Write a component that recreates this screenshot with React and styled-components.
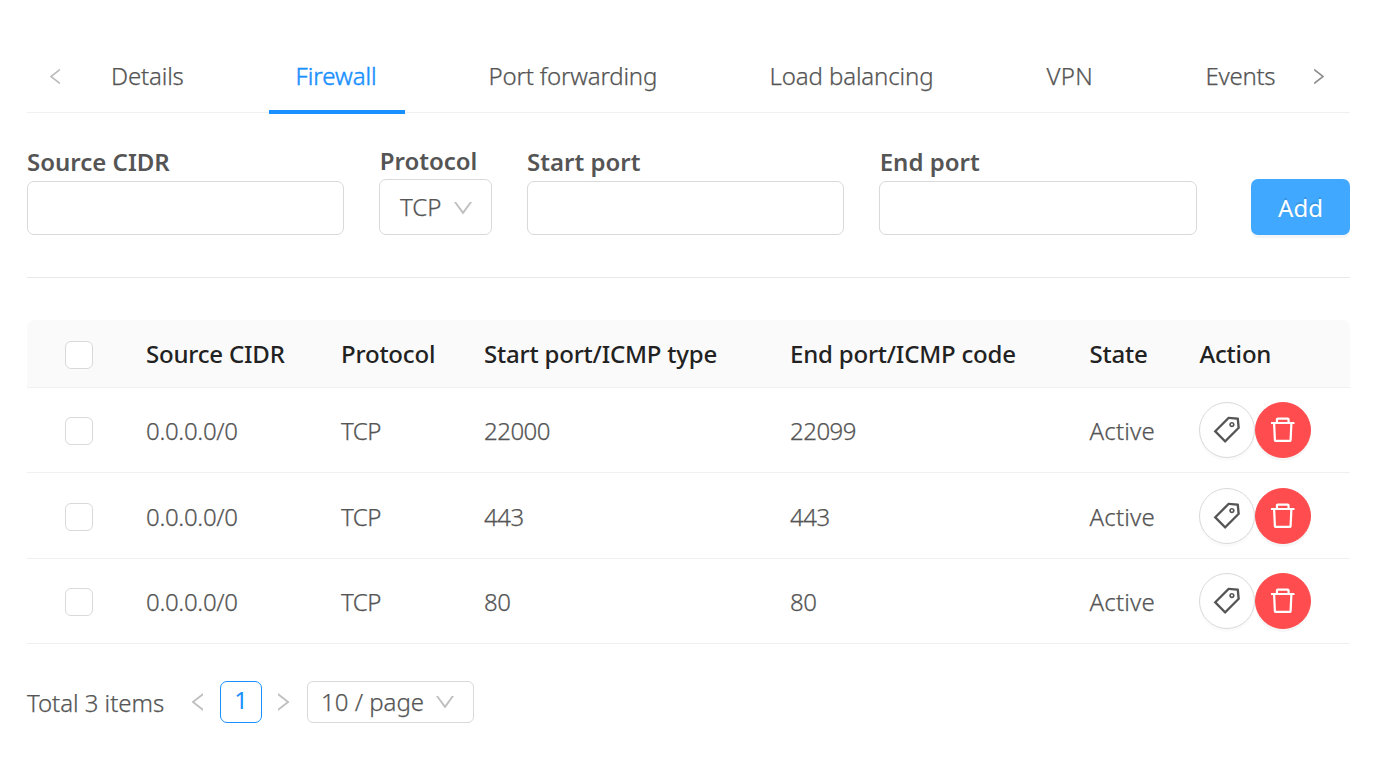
import React from 'react';
import styled, { createGlobalStyle, css } from 'styled-components';
import {
  AiOutlineLeft,
  AiOutlineRight,
  AiOutlineDown,
  AiOutlineTag,
  AiOutlineDelete,
} from 'react-icons/ai';

const Global = createGlobalStyle`
  *, *::before, *::after { box-sizing: border-box; }
  body {
    margin: 0;
    background: #fff;
    color: #555;
    font: 300 24px/38px "Noto Sans", "Open Sans", sans-serif;
    -webkit-text-stroke: 0.25px currentColor;
  }
  button, input { font: inherit; color: inherit; margin: 0; outline: none; }
  svg { display: block; flex: none; }
`;

const Page = styled.main`
  width: 1380px;
  height: 757px;
  padding: 39px 30px 0 27px;
  overflow: hidden;
`;

const TabBar = styled.nav`
  display: flex;
  height: 74px;
  border-bottom: 1px solid #f0f0f0;
`;

const NavArrow = styled.button`
  display: flex;
  align-items: center;
  justify-content: center;
  flex: none;
  width: ${(p) => p.$width}px;
  height: 74px;
  padding: 0;
  border: 0;
  background: none;
  color: ${(p) => (p.$disabled ? '#bbb' : '#8c8c8c')};
`;

const TabList = styled.div`
  display: flex;
  flex: 1;
  gap: 56px;
  height: 75px;
  min-width: 0;
`;

const Tab = styled.div`
  flex: none;
  width: ${(p) => p.$width}px;
  height: 75px;
  padding: 18px 0 0 28px;
  white-space: nowrap;
  letter-spacing: ${(p) => p.$spacing || 0}px;
  ${(p) =>
    p.$active &&
    css`
      padding-left: 27px;
      color: #1890ff;
      border-bottom: 4px solid #1890ff;
      -webkit-text-stroke-width: 0.5px;
    `}
`;

const RuleForm = styled.form`
  display: flex;
  align-items: flex-end;
  height: 165px;
  padding-bottom: 42px;
  border-bottom: 1px solid #e8e8e8;
`;

const Field = styled.label`
  display: flex;
  flex-direction: column;
  flex: none;
  width: ${(p) => p.$width}px;
  margin-right: ${(p) => p.$after}px;
`;

const FieldLabel = styled.span`
  height: ${(p) => p.$height || 38}px;
  padding-left: ${(p) => p.$indent || 0}px;
  white-space: nowrap;
  font-weight: 600;
  -webkit-text-stroke-width: 0;
`;

const TextInput = styled.input`
  width: 100%;
  height: 54px;
  padding: 0 19px;
  border: 1px solid #d9d9d9;
  border-radius: 7px;
  background: #fff;
`;

const Select = styled.div`
  display: flex;
  align-items: center;
  justify-content: space-between;
  width: ${(p) => p.$width}px;
  height: ${(p) => p.$height}px;
  padding: ${(p) => p.$padding};
  border: 1px solid #d9d9d9;
  border-radius: ${(p) => p.$radius}px;
  white-space: nowrap;

  svg {
    margin-top: ${(p) => p.$iconTop || 0}px;
    color: #bfbfbf;
  }
`;

const AddButton = styled.button`
  width: 99px;
  height: 56px;
  padding: 2px 0 0;
  border: 0;
  border-radius: 7px;
  background: #40a9ff;
  box-shadow: 0 3px 0 rgba(0, 0, 0, 0.04);
  color: #fff;
  font-weight: 400;
  text-shadow: 0 -2px 0 rgba(0, 0, 0, 0.12);
  -webkit-text-stroke-width: 0;
`;

const Table = styled.div`
  margin-top: 42px;
`;

const Row = styled.div`
  display: grid;
  grid-template-columns: 119px 195px 143px 306px 299.5px 110px 1fr;
  align-items: center;
  height: ${(p) => p.$height}px;
  border-bottom: 1px solid #f0f0f0;
`;

const HeadRow = styled(Row)`
  border-radius: 7px 7px 0 0;
  background: #fafafa;
  color: #222;
  font-weight: 500;
  letter-spacing: -0.2px;
  -webkit-text-stroke-width: 0;
`;

const Cell = styled.div`
  padding-top: ${(p) => p.$top || 0}px;
  white-space: nowrap;
  letter-spacing: ${(p) => p.$spacing}px;
`;

const Checkbox = styled.div`
  width: 28px;
  height: 28px;
  margin: 2px 0 0 38px;
  border: 1px solid #d9d9d9;
  border-radius: 6px;
  background: #fff;
`;

const Actions = styled.div`
  display: flex;
  margin-left: -0.5px;
`;

const RoundButton = styled.button`
  display: flex;
  align-items: center;
  justify-content: center;
  width: 56px;
  height: 56px;
  padding: 0;
  border: 1px solid ${(p) => (p.$danger ? '#ff4d4f' : '#d9d9d9')};
  border-radius: 50%;
  background: ${(p) => (p.$danger ? '#ff4d4f' : '#fff')};
  color: ${(p) => (p.$danger ? '#fff' : '#555')};
  box-shadow: 0 3px 0 rgba(0, 0, 0, ${(p) => (p.$danger ? 0.04 : 0.018)});
`;

const Pagination = styled.footer`
  display: flex;
  align-items: center;
  height: 42px;
  margin-top: 37px;
`;

const Total = styled.span`
  width: 153px;
  padding-top: 2px;
  white-space: nowrap;
  letter-spacing: -0.05px;
`;

const PageArrow = styled.button`
  display: flex;
  align-items: center;
  justify-content: center;
  width: ${(p) => p.$width}px;
  height: 42px;
  margin-right: ${(p) => p.$after}px;
  padding: 0;
  border: 0;
  background: none;
  color: #bfbfbf;
`;

const PageNumber = styled.div`
  width: 42px;
  height: 42px;
  border: 1px solid #1890ff;
  border-radius: 7px;
  color: #1890ff;
  font-weight: 400;
  line-height: 36px;
  text-align: center;
  -webkit-text-stroke-width: 0;
`;

const TABS = [
  { label: 'Details', width: 129.5, spacing: -0.15 },
  { label: 'Firewall', width: 136, active: true, spacing: 0 },
  { label: 'Port forwarding', width: 225, spacing: -0.18 },
  { label: 'Load balancing', width: 221, spacing: -0.12 },
  { label: 'VPN', width: 103, spacing: 0.3 },
  { label: 'Events', width: 126, spacing: -0.3 },
];

const RULES = [
  { start: '22000', end: '22099', height: 85, top: 1 },
  { start: '443', end: '443', height: 86, top: 2 },
  { start: '80', end: '80', height: 85, top: 1 },
];

export default function App() {
  return (
    <>
      <Global />
      <Page>
        <TabBar>
          <NavArrow $width={56} $disabled><AiOutlineLeft size={21} /></NavArrow>
          <TabList>
            {TABS.map((t) => (
              <Tab key={t.label} $width={t.width} $active={t.active} $spacing={t.spacing}>
                {t.label}
              </Tab>
            ))}
          </TabList>
          <NavArrow $width={63}><AiOutlineRight size={21} /></NavArrow>
        </TabBar>

        <RuleForm>
          <Field $width={317} $after={35}>
            <FieldLabel>Source CIDR</FieldLabel>
            <TextInput />
          </Field>
          <Field $width={113} $after={35}>
            <FieldLabel $height={37} $indent={0.7}>Protocol</FieldLabel>
            <Select $width={113} $height={56} $padding="0 16.5px 0 20px" $radius={7} $iconTop={2}>
              TCP
              <AiOutlineDown size={24} />
            </Select>
          </Field>
          <Field $width={317} $after={35}>
            <FieldLabel>Start port</FieldLabel>
            <TextInput />
          </Field>
          <Field $width={318} $after={54}>
            <FieldLabel $indent={0.7}>End port</FieldLabel>
            <TextInput />
          </Field>
          <AddButton type="button">Add</AddButton>
        </RuleForm>

        <Table>
          <HeadRow $height={68}>
            <Checkbox />
            <Cell>Source CIDR</Cell>
            <Cell>Protocol</Cell>
            <Cell>Start port/ICMP type</Cell>
            <Cell>End port/ICMP code</Cell>
            <Cell>State</Cell>
            <Cell>Action</Cell>
          </HeadRow>
          {RULES.map((r) => (
            <Row key={r.start} $height={r.height}>
              <Checkbox />
              <Cell $top={r.top} $spacing={-0.3}>0.0.0.0/0</Cell>
              <Cell $top={r.top} $spacing={-0.5}>TCP</Cell>
              <Cell $top={r.top} $spacing={-0.5}>{r.start}</Cell>
              <Cell $top={r.top} $spacing={-0.5}>{r.end}</Cell>
              <Cell $top={r.top} $spacing={0.2}>Active</Cell>
              <Actions>
                <RoundButton><AiOutlineTag size={31.5} /></RoundButton>
                <RoundButton $danger><AiOutlineDelete size={31.5} /></RoundButton>
              </Actions>
            </Row>
          ))}
        </Table>

        <Pagination>
          <Total>Total 3 items</Total>
          <PageArrow $width={35} $after={5}><AiOutlineLeft size={24} /></PageArrow>
          <PageNumber>1</PageNumber>
          <PageArrow $width={41} $after={4}><AiOutlineRight size={24} /></PageArrow>
          <Select $width={167} $height={42} $padding="0 16px 0 13px" $radius={6}>
            10 / page
            <AiOutlineDown size={24} />
          </Select>
        </Pagination>
      </Page>
    </>
  );
}
